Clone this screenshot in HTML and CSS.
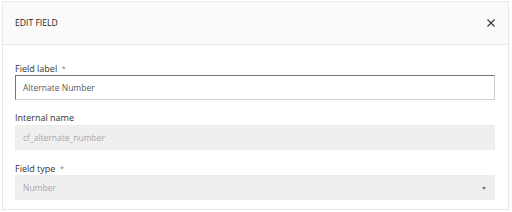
FILE: index.html
```html
<!DOCTYPE html>
<html>
<head>
<meta charset="utf-8">
<link rel="stylesheet" href="styles.css">
</head>
<body>
<div class="card">
  <div class="header">
    <span class="title">EDIT FIELD</span>
    <svg class="close" width="8" height="8" viewBox="0 0 8 8"><path d="M0.5 0.5L7.5 7.5M7.5 0.5L0.5 7.5" stroke="#333" stroke-width="1.1" fill="none"/></svg>
  </div>
  <div class="body">
    <div class="field">
      <div class="label">Field label <span class="req">*</span></div>
      <div class="input active">Alternate Number</div>
    </div>
    <div class="field">
      <div class="label">Internal name</div>
      <div class="input disabled">cf_alternate_number</div>
    </div>
    <div class="field">
      <div class="label">Field type <span class="req">*</span></div>
      <div class="input disabled select">Number<span class="caret"></span></div>
    </div>
  </div>
</div>
</body>
</html>
```
FILE: styles.css
```css
html, body { margin: 0; padding: 0; background: #fff; }
body { font-family: "Open Sans", "Liberation Sans", sans-serif; font-size: 8px; color: #333; }
.card {
  margin: 1px 3px 0 2px;
  border: 1px solid #e8e8e8;
  background: #fff;
  height: 209px;
  box-sizing: border-box;
}
.header {
  height: 42px;
  background: #fafafa;
  border-bottom: 1px solid #e6e6e6;
  display: flex;
  align-items: center;
  justify-content: space-between;
  padding: 0 13px 0 12px;
}
.title { font-size: 8.6px; color: #222; }
.close { display: block; }
.body { padding: 17px 13px 0 12px; }
.field { margin-bottom: 12px; }
.label { font-size: 9px; color: #333; font-weight: 500; height: 12px; line-height: 12px; margin-bottom: 1px; }
.req { color: #888; font-weight: 400; font-size: 8px; margin-left: 2px; vertical-align: 1px; }
.input {
  height: 25px;
  box-sizing: border-box;
  display: flex;
  align-items: center;
  padding: 0 7px;
  font-size: 8.5px;
  position: relative;
}
.active {
  border: 1px solid;
  border-color: #6e7479 #cfcfcf #cfcfcf #6e7479;
  color: #5a5a5a;
}
.disabled {
  background: #efefef;
  border: 1px solid #ececec;
  color: #a8a8a8;
}
.caret {
  position: absolute;
  right: 8px;
  top: 11px;
  width: 0; height: 0;
  border-left: 2.5px solid transparent;
  border-right: 2.5px solid transparent;
  border-top: 3px solid #777;
}
```
